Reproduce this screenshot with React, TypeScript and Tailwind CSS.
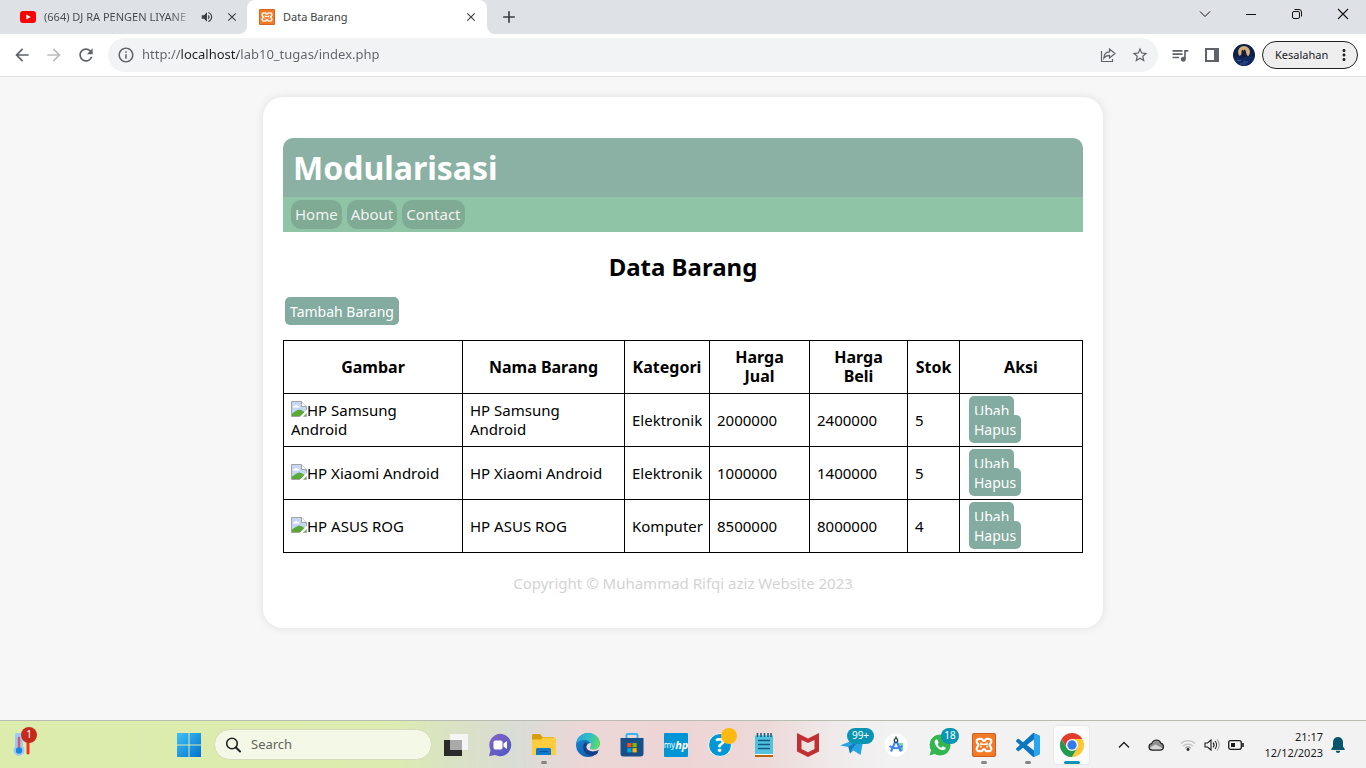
import type { ReactNode } from "react";
import {
  MdAdd,
  MdArrowBack,
  MdArrowForward,
  MdClose,
  MdInfoOutline,
  MdMoreVert,
  MdQueueMusic,
  MdRefresh,
  MdStarBorder,
  MdVolumeUp,
} from "react-icons/md";

type Item = {
  nama: string;
  kategori: string;
  jual: string;
  beli: string;
  stok: string;
};

const items: Item[] = [
  { nama: "HP Samsung Android", kategori: "Elektronik", jual: "2000000", beli: "2400000", stok: "5" },
  { nama: "HP Xiaomi Android", kategori: "Elektronik", jual: "1000000", beli: "1400000", stok: "5" },
  { nama: "HP ASUS ROG", kategori: "Komputer", jual: "8500000", beli: "8000000", stok: "4" },
];

function Xampp({ className }: { className: string }) {
  return (
    <svg viewBox="0 0 24 24" className={className} aria-hidden="true">
      <rect width="24" height="24" rx="2" fill="#c9601f" />
      <rect x="1" y="1" width="22" height="22" rx="1.500" fill="#f37a26" />
      <path
        d="M9.500 5.800H7.600C4.800 5.800 4.200 8 5 9.600c.6 1.200 1.400 1.500 1.400 2.400S5.600 13.200 5 14.400c-.8 1.600-.2 3.800 2.600 3.800h1.900c1.200 0 1.200-2.200 2.500-2.200s1.300 2.200 2.500 2.200h1.900c2.800 0 3.400-2.200 2.600-3.800-.6-1.200-1.400-1.500-1.400-2.400s.8-1.200 1.400-2.400c.8-1.600.2-3.800-2.600-3.800h-1.900c-1.200 0-1.200 2.200-2.500 2.200S10.700 5.800 9.500 5.800z"
        fill="none"
        stroke="#fff"
        strokeWidth="2.200"
      />
      <path d="M9 9.500v1.700h6V9.500M9 14.500v-1.700M15 14.500v-1.700" fill="none" stroke="#fff" strokeWidth="1.500" />
    </svg>
  );
}

function BrokenImage() {
  return (
    <svg viewBox="0 0 16 16" className="inline-block h-4 w-4 align-top" aria-hidden="true">
      <path d="M.5.5h10l5 5v10H.5z" fill="#c4d8f5" stroke="#a3a3a3" />
      <path d="M2 6.500c0-1.200 1-1.800 1.800-1.600C4.300 3.600 6.400 3.500 7 4.900c1 0 1.600.7 1.500 1.600z" fill="#fff" />
      <path d="M1 15v-2.500C3.500 11 6 8.500 8.500 8.500c2 0 4 2.500 6.500 3V15z" fill="#58a935" />
      <path d="M16 8.500 8.500 16H16z" fill="#fff" />
      <path d="M12.500 15.500h3v-3z" fill="#58a935" stroke="#a3a3a3" strokeWidth=".6" />
      <path d="M10.500.5v5h5" fill="#fff" stroke="#a3a3a3" />
    </svg>
  );
}

function TabStrip() {
  return (
    <header className="flex h-[34px] shrink-0 items-stretch bg-[#dee1e6] text-[#3c4043]">
      <div role="tablist" className="flex">
        <div className="flex w-[247px] items-center pl-5 pr-2">
          <svg viewBox="0 0 16 12" className="h-3 w-4 shrink-0" aria-hidden="true">
            <rect width="16" height="12" rx="3" fill="#f00" />
            <path d="M6.300 3.400v5.200L10.800 6z" fill="#fff" />
          </svg>
          <button
            role="tab"
            aria-selected="false"
            className="ml-2 w-[150px] whitespace-nowrap bg-gradient-to-r from-[#45494d] from-85% to-[#dee1e6] bg-clip-text text-left text-[11px] text-transparent"
          >
            (664) DJ RA PENGEN LIYANE
          </button>
          <button aria-label="Mute tab" className="ml-[6px]">
            <MdVolumeUp className="h-[14px] w-[14px]" />
          </button>
          <button aria-label="Close tab" className="ml-auto">
            <MdClose className="h-[14px] w-[14px]" />
          </button>
        </div>
        <div className="relative flex w-60 items-center rounded-t-lg bg-white pl-3 pr-[9px]">
          <svg viewBox="0 0 8 8" className="absolute -left-2 bottom-0 h-2 w-2" aria-hidden="true">
            <path d="M8 0v8H0a8 8 0 0 0 8-8z" fill="#fff" />
          </svg>
          <svg viewBox="0 0 8 8" className="absolute -right-2 bottom-0 h-2 w-2" aria-hidden="true">
            <path d="M0 0v8h8a8 8 0 0 1-8-8z" fill="#fff" />
          </svg>
          <Xampp className="h-4 w-4" />
          <button role="tab" aria-selected="true" className="ml-2 text-[11px]">
            Data Barang
          </button>
          <button aria-label="Close tab" className="ml-auto">
            <MdClose className="h-[14px] w-[14px]" />
          </button>
        </div>
      </div>
      <button aria-label="New tab" className="ml-3">
        <MdAdd className="h-5 w-5" />
      </button>
      <div className="flex flex-1 items-start justify-end text-[#111]">
        <button aria-label="Search tabs" className="flex h-7 w-[46px] items-center justify-center">
          <svg viewBox="0 0 12 12" className="h-3 w-3" fill="none" stroke="currentColor">
            <path d="m1 3.500 5 5 5-5" />
          </svg>
        </button>
        <button aria-label="Minimize" className="flex h-7 w-[46px] items-center justify-center">
          <svg viewBox="0 0 12 12" className="h-3 w-3" fill="none" stroke="currentColor">
            <path d="M1 6.500h10" />
          </svg>
        </button>
        <button aria-label="Restore" className="flex h-7 w-[46px] items-center justify-center">
          <svg viewBox="0 0 12 12" className="h-3 w-3" fill="none" stroke="currentColor">
            <rect x="1.500" y="3.500" width="7" height="7" rx="1.500" />
            <path d="M3.500 1.500H8a2.500 2.500 0 0 1 2.500 2.500v4.500" />
          </svg>
        </button>
        <button aria-label="Close" className="flex h-7 w-[46px] items-center justify-center">
          <svg viewBox="0 0 12 12" className="h-3 w-3" fill="none" stroke="currentColor" strokeWidth="1.100">
            <path d="m1 1 10 10M11 1 1 11" />
          </svg>
        </button>
      </div>
    </header>
  );
}

function Toolbar() {
  return (
    <div className="flex h-[43px] shrink-0 items-center border-b border-[#dcdee0] bg-white pl-3 pr-2 text-[#5f6368]">
      <div className="flex gap-3">
        <button aria-label="Back">
          <MdArrowBack className="h-5 w-5" />
        </button>
        <button aria-label="Forward" className="text-[#babcbe]">
          <MdArrowForward className="h-5 w-5" />
        </button>
        <button aria-label="Reload">
          <MdRefresh className="h-5 w-5" />
        </button>
      </div>
      <div className="ml-3 flex h-[34px] flex-1 items-center rounded-full bg-[#f1f3f4] pl-[9px] pr-[9px]">
        <button aria-label="Site information">
          <MdInfoOutline className="h-[18px] w-[18px]" />
        </button>
        <input
          aria-label="Address"
          defaultValue="http://localhost/lab10_tugas/index.php"
          className="ml-[7px] min-w-0 flex-1 bg-[linear-gradient(90deg,#5f6368_39px,#202124_39px,#202124_96px,#5f6368_96px)] bg-clip-text text-[13px] text-transparent outline-none"
        />
        <div className="flex gap-[14px]">
          <button aria-label="Share">
            <svg viewBox="0 0 18 18" className="h-[18px] w-[18px]" fill="none" stroke="currentColor" strokeWidth="1.200">
              <path d="M2.500 5v10.500h11V13" />
              <path d="M10.500 3v2.800C7 6 5 8.500 4.800 12.200c1.500-2 3-2.900 5.700-2.900V12L16 7.500z" />
            </svg>
          </button>
          <button aria-label="Bookmark">
            <MdStarBorder className="h-[18px] w-[18px]" />
          </button>
        </div>
      </div>
      <button aria-label="Media controls" className="ml-3">
        <MdQueueMusic className="h-5 w-5" />
      </button>
      <button aria-label="Side panel" className="ml-[15px]">
        <svg viewBox="0 0 14 14" className="h-[14px] w-[14px]">
          <path d="M0 0h14v14H0zM2 2v10h7V2z" fill="currentColor" fillRule="evenodd" />
        </svg>
      </button>
      <button aria-label="Profile" className="ml-[14px]">
        <svg viewBox="0 0 22 22" className="h-[22px] w-[22px]">
          <circle cx="11" cy="11" r="11" fill="#0c1f4e" />
          <circle cx="11" cy="8" r="6" fill="#d3b077" />
          <path d="m8.500 7 1.200-1.500.8 1.200 1.500-1.500.8 2 .7 3 2 3-4 2H8l-2-2.500 2.500-2.500z" fill="#141d3d" />
          <path d="M1 13.500c3-1.500 5 1 10 0s6-2 10 0C20 18 16 22 11 22S2 18 1 13.500z" fill="#122a60" />
          <path d="M4 16.500h4m2 1.500h5m-8 2h6" stroke="#365a94" strokeWidth="1" />
        </svg>
      </button>
      <button className="ml-[7px] flex h-7 w-24 items-center justify-between rounded-full border border-[#202124] bg-[#eee] pl-3 pr-1 text-[11px] text-[#202124]">
        Kesalahan
        <MdMoreVert className="h-[18px] w-[18px]" />
      </button>
    </div>
  );
}

const navLinks = ["Home", "About", "Contact"];

function Page() {
  return (
    <main className="flex flex-1 flex-col items-center bg-[#f7f7f7] px-4 py-5 text-[15px] leading-[19px] text-black">
      <div className="w-full max-w-[840px] rounded-[20px] bg-white px-5 pb-[35px] pt-[41px] shadow-[0_0_10px_rgba(0,0,0,0.1)]">
        <h1 className="rounded-t-[10px] bg-[#8ab1a4] px-[10px] py-[10px] text-[32px] font-bold leading-[39px] text-white">
          Modularisasi
        </h1>
        <nav className="flex gap-[5px] bg-[#8fc4a7] px-2 py-[3px]">
          {navLinks.map((label) => (
            <a key={label} href="#" className="rounded-[10px] bg-[#7fab94] px-1 py-[5px] text-[#f2f2f2]">
              {label}
            </a>
          ))}
        </nav>
        <h2 className="mt-5 text-center text-2xl font-bold leading-[29px]">Data Barang</h2>
        <div className="ml-[2px] mt-4 flex">
          <a href="#" className="rounded-[5px] bg-[#83aba0] px-[5px] pb-1 pt-[5px] text-sm leading-[19px] text-white">
            Tambah Barang
          </a>
        </div>
        <table className="mt-[15px] w-full table-fixed border-collapse">
          <colgroup>
            <col className="w-[179px]" />
            <col className="w-[162px]" />
            <col className="w-[85px]" />
            <col className="w-[100px]" />
            <col className="w-[98px]" />
            <col className="w-[52px]" />
            <col />
          </colgroup>
          <thead>
            <tr>
              {["Gambar", "Nama Barang", "Kategori", "Harga Jual", "Harga Beli", "Stok", "Aksi"].map((h) => (
                <th
                  key={h}
                  className={`border border-black py-[7px] text-base leading-[19px] font-bold ${h.startsWith("Harga") ? "px-5" : "px-0"}`}
                >
                  {h}
                </th>
              ))}
            </tr>
          </thead>
          <tbody>
            {items.map((item) => (
              <tr key={item.nama}>
                <td className="border border-black p-[7px]">
                  <BrokenImage />
                  {item.nama}
                </td>
                <td className="border border-black p-[7px]">{item.nama}</td>
                <td className="border border-black py-[7px] pl-[7px]">{item.kategori}</td>
                <td className="border border-black p-[7px]">{item.jual}</td>
                <td className="border border-black p-[7px]">{item.beli}</td>
                <td className="border border-black p-[7px]">{item.stok}</td>
                <td className="border border-black px-[9px] py-[7px] text-sm leading-[19px]">
                  <a href="#" className="rounded-[5px] bg-[#83aba0] px-[5px] pb-1 pt-[5px] text-white">
                    Ubah
                  </a>
                  <br />
                  <a href="#" className="rounded-[5px] bg-[#83aba0] px-[5px] pb-1 pt-[5px] text-white">
                    Hapus
                  </a>
                </td>
              </tr>
            ))}
          </tbody>
        </table>
        <footer className="mt-[21px] text-center text-[#d3d3d3]">
          Copyright © Muhammad Rifqi aziz Website 2023
        </footer>
      </div>
    </main>
  );
}

function TaskButton({ label, running, children }: { label: string; running?: boolean; children: ReactNode }) {
  return (
    <button aria-label={label} className="relative flex h-12 w-11 shrink-0 items-center justify-center">
      {children}
      {running && <span className="absolute bottom-[5px] h-[3px] w-[6px] rounded-full bg-[#858585]" />}
    </button>
  );
}

function Taskbar() {
  return (
    <footer className="flex h-12 shrink-0 items-center border-t border-[#b9bcb0] bg-[linear-gradient(90deg,#dcecac_0%,#dcecb0_29%,#d9e2c4_33%,#dadcd6_38%,#ecd6d6_43%,#eed5d5_50%,#ecd9d8_56%,#f0eaea_61%,#f2f2f2_65%,#f2f2f2_100%)]">
      <div className="w-[167px] shrink-0 pl-3">
        <button aria-label="Weather, 1 alert" className="relative block">
          <svg viewBox="0 0 24 24" className="h-6 w-6">
            <path d="M3 3a4 4 0 0 1 8 0v10.500a5.500 5.500 0 1 1-8 0z" fill="#9dcbf5" />
            <path d="M7 5v13" stroke="#d65a6b" strokeWidth="2.500" strokeLinecap="round" />
            <circle cx="7" cy="17.500" r="3.200" fill="#1d87dd" />
            <path d="M16 8v12" stroke="#f0331f" strokeWidth="3" strokeLinecap="round" />
          </svg>
          <span className="absolute -top-[6px] left-[9px] flex h-4 w-4 items-center justify-center rounded-full bg-[#c42b1c] text-[10px] text-white">
            1
          </span>
        </button>
      </div>
      <TaskButton label="Start">
        <svg viewBox="0 0 24 24" className="h-6 w-6">
          <defs>
            <linearGradient id="win" x1="0" y1="0" x2="1" y2="1">
              <stop offset="0" stopColor="#3ec2f5" />
              <stop offset="1" stopColor="#0371cf" />
            </linearGradient>
          </defs>
          <path d="M0 0h11.500v11.500H0zM12.500 0H24v11.500H12.500zM0 12.500h11.500V24H0zM12.500 12.500H24V24H12.500z" fill="url(#win)" />
        </svg>
      </TaskButton>
      <label className="ml-[3px] flex h-[31px] w-[218px] items-center rounded-full border border-[#d5dcbd] bg-[#f4f8e6] pl-[10px]">
        <svg viewBox="0 0 16 16" className="h-4 w-4 shrink-0" fill="none" stroke="#222" strokeWidth="1.600">
          <circle cx="7" cy="6.500" r="5.300" />
          <path d="m11 10.500 4 4" strokeLinecap="round" strokeWidth="2" />
        </svg>
        <input
          aria-label="Search"
          placeholder="Search"
          className="ml-[10px] w-full min-w-0 bg-transparent text-[13px] outline-none placeholder:text-[#62655d]"
        />
      </label>
      <div className="ml-[2px] flex">
        <TaskButton label="Task view">
          <svg viewBox="0 0 24 24" className="h-6 w-6">
            <path d="M0 7h18v16H0z" fill="#2a2a2a" />
            <path d="M6 1h18v16H6z" fill="#f5f5f5" />
            <path d="M6 7h12v10H6z" fill="#a9a9a9" />
          </svg>
        </TaskButton>
        <TaskButton label="Chat">
          <svg viewBox="0 0 24 24" className="h-6 w-6">
            <defs>
              <linearGradient id="chat" x1="0" y1="0" x2="1" y2="1">
                <stop offset="0" stopColor="#8764c4" />
                <stop offset="1" stopColor="#4c58c6" />
              </linearGradient>
            </defs>
            <path d="M12.500.8A11.200 11.200 0 1 1 7 22L1 23.200 2.500 17A11.200 11.200 0 0 1 12.500.8z" fill="url(#chat)" />
            <rect x="5.500" y="7.500" width="9" height="9" rx="1.800" fill="#fff" />
            <path d="m15.500 10.500 3.500-2.500v8l-3.500-2.500z" fill="#fff" />
          </svg>
        </TaskButton>
        <TaskButton label="File Explorer" running>
          <svg viewBox="0 0 24 24" className="h-6 w-6">
            <path d="M0 2.500A1.500 1.500 0 0 1 1.500 1H8l2.500 3H22v6H0z" fill="#d99d0c" />
            <path d="M0 6.500h8.500l2.500-2h11.500A1.500 1.500 0 0 1 24 6v16H0z" fill="#fdcd3f" />
            <path d="M4 22v-5.500A1.500 1.500 0 0 1 5.500 15h12a1.500 1.500 0 0 1 1.500 1.500V22z" fill="#1178cf" />
            <path d="M7.500 18.500h8" stroke="#0a559d" strokeWidth="1.200" />
          </svg>
        </TaskButton>
        <TaskButton label="Microsoft Edge">
          <svg viewBox="0 0 24 24" className="h-6 w-6">
            <defs>
              <linearGradient id="edgeTop" x1="0" y1=".3" x2="1" y2=".5">
                <stop offset="0" stopColor="#2aa5e0" />
                <stop offset=".6" stopColor="#33c3bd" />
                <stop offset="1" stopColor="#5fdc5d" />
              </linearGradient>
              <linearGradient id="edgeLow" x1="0" y1="0" x2="1" y2="1">
                <stop offset="0" stopColor="#1c8ddb" />
                <stop offset="1" stopColor="#0c4a9b" />
              </linearGradient>
            </defs>
            <circle cx="12" cy="12" r="12" fill="url(#edgeLow)" />
            <path d="M9.500 9.300c-2 1.600-2.800 4-2 6.900 1 3.500 4.200 6.300 8.500 6.300 2.500 0 4.800-1.200 6.200-2.800L18 17z" fill="#123f86" />
            <path d="M12.800 10.500c-1.800.8-2.800 2.500-2.300 4.300.8 3.200 5.800 5 12.300 2.300L24.500 15l-1-4-8-2z" fill="#ecd6d6" />
            <path d="M.2 10.500C1.200 4.200 6.200 0 12 0c7 0 12 5 12 10.500 0 3.700-2.800 6-6.200 6-2.600 0-3.900-.8-3.900-1.600 0-.7 1-1.100 1-3.100 0-2.500-2.500-4.900-6.200-4.900-4 0-7 1.600-8.500 3.600z" fill="url(#edgeTop)" />
          </svg>
        </TaskButton>
        <TaskButton label="Microsoft Store">
          <svg viewBox="0 0 24 24" className="h-6 w-6">
            <path d="M6.500 6V2.500A1.500 1.500 0 0 1 8 1h8a1.500 1.500 0 0 1 1.500 1.500V6" fill="none" stroke="#35b7ed" strokeWidth="2" />
            <path d="M.5 5h23v15.500A3 3 0 0 1 20.500 23.500h-17A3 3 0 0 1 .5 20.500z" fill="#174f86" />
            <path d="M7.300 10h4.200v4.200H7.300z" fill="#f25022" />
            <path d="M12.500 10h4.200v4.200h-4.200z" fill="#7fba00" />
            <path d="M7.300 15.200h4.200v4.200H7.300z" fill="#00a4ef" />
            <path d="M12.500 15.200h4.200v4.200h-4.200z" fill="#ffb900" />
          </svg>
        </TaskButton>
        <TaskButton label="myHP">
          <span className="flex h-6 w-6 items-center justify-center rounded-[1px] bg-[#0096d6] text-[8px] leading-none text-white">
            my<b className="text-[11px] italic">hp</b>
          </span>
        </TaskButton>
        <TaskButton label="HP Support Assistant">
          <span className="flex h-6 w-6 items-center justify-center rounded-full border border-white bg-[#0596d5] text-xl font-bold leading-none text-white">
            ?
          </span>
          <span className="absolute right-[5px] top-[7px] h-4 w-4 rounded-full bg-[#ffb910]" />
        </TaskButton>
        <TaskButton label="Notepad">
          <svg viewBox="0 0 20 24" className="h-6 w-5">
            <path d="M1 2.500h18V21H1z" fill="#53c2de" />
            <path d="M1 21h18v1H1z" fill="#fff" />
            <path d="M1 22h18v2H1z" fill="#b9630e" />
            <path d="M3.500 0v4M7 0v4M10.500 0v4M14 0v4M17 0v4" stroke="#125a77" strokeWidth="1.500" />
            <path d="M4 7.500h12M4 11.500h12M4 15.500h12" stroke="#125a80" strokeWidth="1.500" />
          </svg>
        </TaskButton>
        <TaskButton label="McAfee">
          <svg viewBox="0 0 22 24" className="h-6 w-[22px]">
            <path d="M0 0 11 5.500 22 0v18.500L11 24 0 18.500zM4.500 7v9l6.500 3.200 6.500-3.200V7L11 10z" fill="#c12f33" fillRule="evenodd" />
          </svg>
        </TaskButton>
        <TaskButton label="Telegram, 99+ messages">
          <svg viewBox="0 0 24 24" className="h-6 w-6">
            <path d="M0 12.500 24 3l-3.500 19-7-4.500-3.500 3-1.500-6.500z" fill="#25a3e2" />
            <path d="M8.500 14 20 6.500l-8 9-2 5z" fill="#1478b8" />
          </svg>
          <span className="absolute left-[17px] top-[7px] flex h-4 w-[27px] items-center justify-center rounded-full bg-[#0a94b3] text-[10px] text-white">
            99+
          </span>
        </TaskButton>
        <TaskButton label="Android Studio">
          <svg viewBox="0 0 24 24" className="h-6 w-6">
            <circle cx="12" cy="12" r="11.500" fill="#fff" />
            <path d="M14 10h5v8h-4z" fill="#6fdc9c" />
            <path d="m12 7-5 11.500M12 7l5 11.500M5.500 13c3.500 3 9.500 3 13 0" fill="none" stroke="#4284f3" strokeWidth="2.200" />
            <circle cx="12" cy="7.500" r="1.800" fill="#fff" stroke="#19454f" strokeWidth="1.300" />
            <path d="M12 3.500V6" stroke="#19454f" strokeWidth="1.500" />
          </svg>
        </TaskButton>
        <TaskButton label="WhatsApp, 18 messages">
          <svg viewBox="0 0 24 24" className="h-6 w-6">
            <path d="M12 1a11 11 0 1 1-5.300 20.600L.8 23.200l1.600-5.900A11 11 0 0 1 12 1z" fill="#33b550" stroke="#fff" />
            <path d="M8.200 6.500c-.8.200-1.700 1.500-1.500 2.800.7 4.200 4.300 7.700 8.200 8 1.500 0 2.900-1.100 2.900-2.500l-3-1.500-1.500 1.500c-1.600-.6-3-2-3.700-3.600l1.100-1.400-1.200-3c-.3-.3-.8-.4-1.300-.3z" fill="#fff" />
          </svg>
          <span className="absolute right-[3px] top-[7px] flex h-4 w-[18px] items-center justify-center rounded-full bg-[#0a94b3] text-[10px] text-white">
            18
          </span>
        </TaskButton>
        <TaskButton label="XAMPP" running>
          <Xampp className="h-6 w-6" />
        </TaskButton>
        <TaskButton label="Visual Studio Code" running>
          <svg viewBox="0 0 24 24" className="h-6 w-6">
            <path
              d="M23.150 2.587L18.210.21a1.494 1.494 0 0 0-1.705.29l-9.460 8.630-4.120-3.128a.999.999 0 0 0-1.276.057L.327 7.261A1 1 0 0 0 .326 8.740L3.899 12 .326 15.260a1 1 0 0 0 .001 1.479L1.650 17.940a.999.999 0 0 0 1.276.057l4.120-3.128 9.460 8.630a1.492 1.492 0 0 0 1.704.29l4.942-2.377A1.500 1.500 0 0 0 24 20.060V3.939a1.500 1.500 0 0 0-.85-1.352zm-5.146 14.861L10.826 12l7.178-5.448v10.896z"
              fill="#0c77c0"
            />
            <path d="M18 .2 23.200 2.600A1.500 1.500 0 0 1 24 3.900v16.200a1.500 1.500 0 0 1-.8 1.300L18 23.800z" fill="#2aa5ee" />
          </svg>
        </TaskButton>
        <button
          aria-label="Google Chrome"
          className="relative ml-[3px] flex h-10 w-[37px] shrink-0 items-center justify-center self-center rounded border border-[#e8e8e8] bg-[#fbfbfb]"
        >
          <svg viewBox="0 0 48 48" className="h-6 w-6 shrink-0">
            <path d="M24 12h20.800A24 24 0 0 1 24 48l10.400-18z" fill="#fcc934" />
            <path d="M13.600 30 3.200 12A24 24 0 0 0 24 48l10.400-18z" fill="#229a4f" />
            <path d="M24 12h20.800A24 24 0 0 0 3.200 12l10.400 18z" fill="#e33b2e" />
            <circle cx="24" cy="24" r="12" fill="#fff" />
            <circle cx="24" cy="24" r="9.300" fill="#2f7de9" />
          </svg>
          <span className="absolute bottom-0 h-[3px] w-4 rounded-full bg-[#0a94b3]" />
        </button>
      </div>
      <div className="ml-auto flex shrink-0 items-center pr-[21px] text-[#1b1b1b]">
        <button aria-label="Show hidden icons">
          <svg viewBox="0 0 12 12" className="h-3 w-3" fill="none" stroke="currentColor" strokeWidth="1.300">
            <path d="m1 8.500 5-5 5 5" />
          </svg>
        </button>
        <button aria-label="OneDrive" className="ml-[18px]">
          <svg viewBox="0 0 16 12" className="h-3 w-4">
            <path d="M4 11.200a3.300 3.300 0 0 1-.4-6.500C4.500 2.500 6.300 1 8.500 1c2 0 3.700 1.200 4.300 3.100 1.700.4 2.700 1.800 2.700 3.500 0 2-1.500 3.600-3.500 3.600z" fill="#8f8f8f" />
            <path d="m1.500 9 6-3.500 7.500 4-2 1.500H4z" fill="#d5d5d5" />
            <path d="M4 11.200a3.300 3.300 0 0 1-.4-6.500C4.500 2.500 6.300 1 8.500 1c2 0 3.700 1.200 4.300 3.100 1.700.4 2.700 1.800 2.700 3.500 0 2-1.500 3.600-3.500 3.600z" fill="none" stroke="#222" strokeWidth="1.200" />
          </svg>
        </button>
        <button aria-label="Network, sound and battery" className="ml-4 flex items-center gap-2">
          <svg viewBox="0 0 16 14" className="h-[14px] w-4" fill="none" stroke="#c3c3c3" strokeWidth="1.200">
            <path d="M1 5.500a10 10 0 0 1 14 0M3.200 8a7 7 0 0 1 9.600 0" />
            <path d="M5.300 10.200a4 4 0 0 1 5.400 0" stroke="#9a9a9a" />
            <circle cx="8" cy="11.500" r="1.400" fill="#222" stroke="none" />
          </svg>
          <svg viewBox="0 0 16 14" className="h-[14px] w-4" fill="none" stroke="currentColor" strokeWidth="1.100">
            <path d="M1 5v4h2.500L7 12V2L3.500 5zM9 4.700c1.200 1.300 1.200 3.300 0 4.600M11 3c2 2.300 2 5.700 0 8" />
            <path d="M13 1.500c3 3.200 3 7.800 0 11" stroke="#aaa" />
          </svg>
          <svg viewBox="0 0 16 12" className="h-3 w-4" fill="none" stroke="currentColor" strokeWidth="1.300">
            <rect x=".7" y="1.700" width="12.600" height="8.600" rx="2" />
            <path d="M3 4h4v4H3z" fill="currentColor" stroke="none" />
            <path d="M15 4v4" strokeWidth="1.600" />
          </svg>
        </button>
        <div className="ml-4 flex w-[63px] flex-col items-end whitespace-nowrap text-[11px] leading-4">
          <div>21:17</div>
          <div>12/12/2023</div>
        </div>
        <button aria-label="Notifications" className="ml-2">
          <svg viewBox="0 0 14 16" className="h-4 w-[14px]">
            <path d="M7 0a5 5 0 0 1 5 5v4.500l1.700 2.500v1H.3v-1L2 9.500V5a5 5 0 0 1 5-5zM4.800 13.700h4.400a2.200 2.200 0 0 1-4.400 0z" fill="#06556d" />
          </svg>
        </button>
      </div>
    </footer>
  );
}

export default function App() {
  return (
    <div className="flex min-h-screen flex-col bg-[#f7f7f7] font-['Noto_Sans',sans-serif]">
      <TabStrip />
      <Toolbar />
      <Page />
      <Taskbar />
    </div>
  );
}
